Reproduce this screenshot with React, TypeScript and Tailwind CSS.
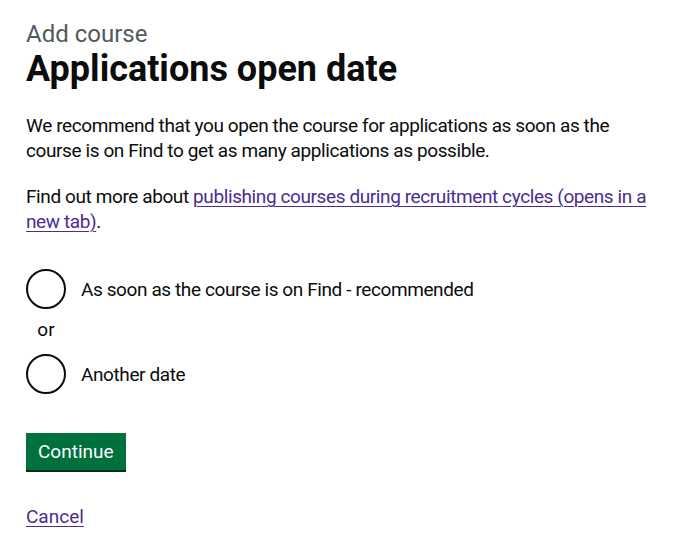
const FONT = "font-['Roboto',_'Liberation_Sans',_sans-serif]";

function Radio({ label }: { label: string }) {
  return (
    <label className="flex items-center">
      <span className="h-10 w-10 shrink-0 rounded-full border-2 border-[#0b0c0c] bg-white" />
      <span className="pl-[15px] text-[19px] leading-[25px] tracking-[-0.4px] text-[#0b0c0c]">{label}</span>
    </label>
  );
}

export default function App() {
  return (
    <div className={`${FONT} min-h-screen bg-white px-[26px] pt-[19px] text-[#0b0c0c]`}>
      <span className="block text-[24px] leading-[30px] text-[#505a5f]">Add course</span>
      <h1 className="text-[36px] font-bold leading-[40px]">Applications open date</h1>

      <div className="max-w-[632px]">
        <p className="mt-[24px] text-[19px] leading-[25px] tracking-[-0.4px]">
          We recommend that you open the course for applications as soon as the course is on Find to get as
          many applications as possible.
        </p>
        <p className="mt-[21px] text-[19px] leading-[25px] tracking-[-0.4px]">
          Find out more about{" "}
          <a href="#" className="text-[#4c2c92] underline decoration-1 underline-offset-[3px]">
            publishing courses during recruitment cycles (opens in a new tab)
          </a>
          .
        </p>
      </div>

      <div className="mt-[35px] flex flex-col">
        <Radio label="As soon as the course is on Find - recommended" />
        <div className="mb-[8px] mt-[4px] w-10 text-center text-[19px] leading-[33px]">or</div>
        <Radio label="Another date" />
      </div>

      <button className="mt-[39px] bg-[#00703c] px-3 pb-[7px] pt-[8px] text-[19px] leading-[22px] text-white shadow-[0_2px_0_#002d18]">
        Continue
      </button>

      <div className="mt-[34px]">
        <a href="#" className="text-[19px] leading-[25px] text-[#4c2c92] underline decoration-1 underline-offset-[3px]">
          Cancel
        </a>
      </div>
    </div>
  );
}
